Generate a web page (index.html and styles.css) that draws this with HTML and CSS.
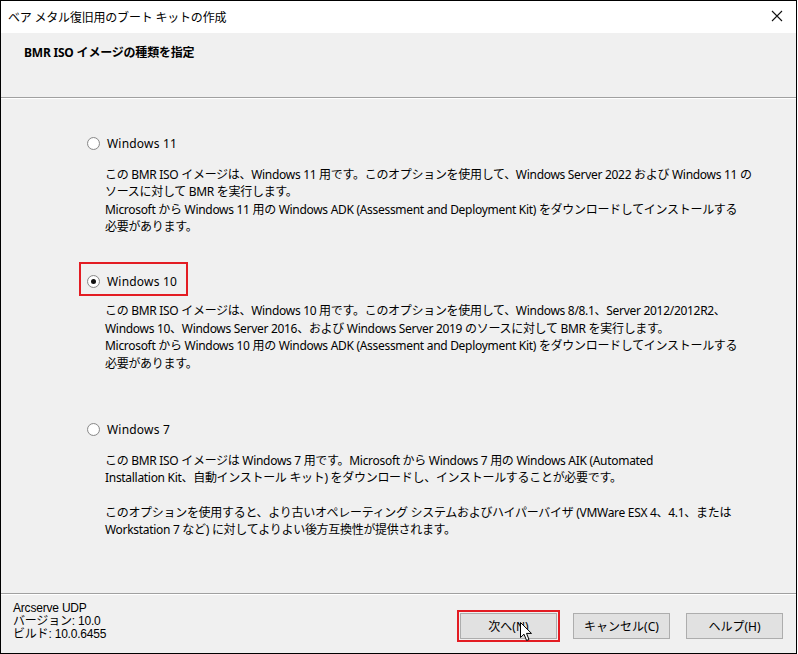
FILE: index.html
```html
<!DOCTYPE html>
<html lang="ja">
<head>
  <meta charset="UTF-8">
  <title>ベア メタル復旧用のブート キットの作成</title>
  <link rel="stylesheet" href="styles.css">
</head>
<body>
  <div class="window">
    <div class="titlebar">
      <span class="title">ベア メタル復旧用のブート キットの作成</span>
      <svg class="close" width="12" height="12" viewBox="0 0 12 12">
        <path d="M1 1 L11 11 M11 1 L1 11" stroke="#111" stroke-width="1.1" fill="none"/>
      </svg>
    </div>

    <div class="header">
      <h1>BMR ISO イメージの種類を指定</h1>
    </div>

    <div class="content">
      <div class="option opt-11">
        <label class="radio-row">
          <span class="radio"></span>
          <span class="radio-label">Windows 11</span>
        </label>
        <p class="desc">この BMR ISO イメージは、Windows 11 用です。このオプションを使用して、Windows Server 2022 および Windows 11 の<br>ソースに対して BMR を実行します。<br>Microsoft から Windows 11 用の Windows ADK (Assessment and Deployment Kit) をダウンロードしてインストールする<br>必要があります。</p>
      </div>

      <div class="option opt-10">
        <label class="radio-row highlighted">
          <span class="radio checked"></span>
          <span class="radio-label">Windows 10</span>
        </label>
        <p class="desc">この BMR ISO イメージは、Windows 10 用です。このオプションを使用して、Windows 8/8.1、Server 2012/2012R2、<br>Windows 10、Windows Server 2016、および Windows Server 2019 のソースに対して BMR を実行します。<br>Microsoft から Windows 10 用の Windows ADK (Assessment and Deployment Kit) をダウンロードしてインストールする<br>必要があります。</p>
      </div>

      <div class="option opt-7">
        <label class="radio-row">
          <span class="radio"></span>
          <span class="radio-label">Windows 7</span>
        </label>
        <p class="desc">この BMR ISO イメージは Windows 7 用です。Microsoft から Windows 7 用の Windows AIK (Automated<br>Installation Kit、自動インストール キット) をダウンロードし、インストールすることが必要です。</p>
        <p class="desc">このオプションを使用すると、より古いオペレーティング システムおよびハイパーバイザ (VMWare ESX 4、4.1、または<br>Workstation 7 など) に対してよりよい後方互換性が提供されます。</p>
      </div>
    </div>

    <div class="footer">
      <div class="version">
        Arcserve UDP<br>
        バージョン: 10.0<br>
        ビルド: 10.0.6455
      </div>
      <div class="buttons">
        <button class="btn highlighted">次へ(N)
          <svg class="cursor" width="13" height="20" viewBox="0 0 13 20">
            <path d="M0.5 0.5 L0.5 15.5 L4 12.2 L6.6 18.5 L9 17.5 L6.5 11.4 L11.5 11.4 Z" fill="#fff" stroke="#000" stroke-width="1"/>
          </svg>
        </button>
        <button class="btn">キャンセル(C)</button>
        <button class="btn">ヘルプ(H)</button>
      </div>
    </div>
  </div>
</body>
</html>
```

FILE: styles.css
```css
body {
  margin: 0;
  padding: 0;
  background-color: #fff;
  font-family: 'Noto Sans', 'Noto Sans CJK JP', sans-serif;
  font-size: 12px;
  color: #000;
}
.window {
  width: 797px;
  height: 654px;
  box-sizing: border-box;
  border: 1px solid #000;
  background-color: #f0f0f0;
  display: flex;
  flex-direction: column;
}
.titlebar {
  height: 32px;
  background-color: #fff;
  display: flex;
  align-items: center;
  justify-content: space-between;
  padding: 0 13px 0 7px;
  flex-shrink: 0;
}
.title {
  font-size: 12px;
  margin-top: -1px;
  letter-spacing: -0.2px;
}
.close {
  display: block;
  margin-top: -2px;
}
.header {
  height: 65px;
  flex-shrink: 0;
  border-bottom: 1px solid #a0a0a0;
  box-shadow: 0 1px 0 #fff;
  box-sizing: border-box;
  padding: 10px 0 0 23px;
}
.header h1 {
  margin: 0;
  font-size: 12px;
  font-weight: bold;
  line-height: 20px;
  letter-spacing: -0.2px;
}
.content {
  flex: 1;
  padding: 35px 0 0 86px;
  letter-spacing: -0.3px;
}
.option {
  margin-bottom: 36px;
}
.option.opt-10 {
  margin-bottom: 47px;
}
.radio-row {
  display: inline-flex;
  align-items: center;
  height: 20px;
  position: relative;
}
.radio {
  width: 11px;
  height: 11px;
  border-radius: 50%;
  border: 1px solid #8a8a8a;
  background: radial-gradient(circle, #fff 55%, #e8e8e8 100%);
  margin-right: 7px;
  position: relative;
}
.radio.checked::after {
  content: "";
  position: absolute;
  left: 3px;
  top: 3px;
  width: 5px;
  height: 5px;
  border-radius: 50%;
  background-color: #111;
}
.radio-label {
  font-size: 12px;
  letter-spacing: 0.2px;
}
.radio-row.highlighted::after {
  content: "";
  position: absolute;
  left: -8px;
  top: -10px;
  right: -11px;
  bottom: -4px;
  border: 2px solid #e31c23;
}
.desc {
  margin: 12px 0 0 18px;
  line-height: 17.5px;
  white-space: nowrap;
}
.opt-10 .desc {
  margin-top: 10px;
}
.opt-7 .desc + .desc {
  margin-top: 17px;
}
.footer {
  height: 59px;
  flex-shrink: 0;
  border-top: 1px solid #a0a0a0;
  box-shadow: inset 0 1px 0 #fff;
  display: flex;
  justify-content: space-between;
  padding: 0 13px 0 12px;
}
.version {
  font-family: 'Liberation Sans', 'Noto Sans CJK JP', sans-serif;
  font-size: 12px;
  line-height: 13px;
  padding-top: 8px;
  letter-spacing: -0.2px;
}
.buttons {
  display: flex;
  gap: 16px;
  padding-top: 19px;
}
.btn {
  width: 97px;
  height: 26px;
  background-color: #e1e1e1;
  border: 1px solid #adadad;
  font-family: 'Noto Sans', 'Noto Sans CJK JP', sans-serif;
  font-size: 12px;
  color: #000;
  padding: 0;
  position: relative;
}
.btn.highlighted::after {
  content: "";
  position: absolute;
  left: -4px;
  top: -4px;
  right: -4px;
  bottom: -4px;
  border: 2px solid #e31c23;
}
.cursor {
  position: absolute;
  left: 59px;
  top: 8px;
  z-index: 2;
}
```
